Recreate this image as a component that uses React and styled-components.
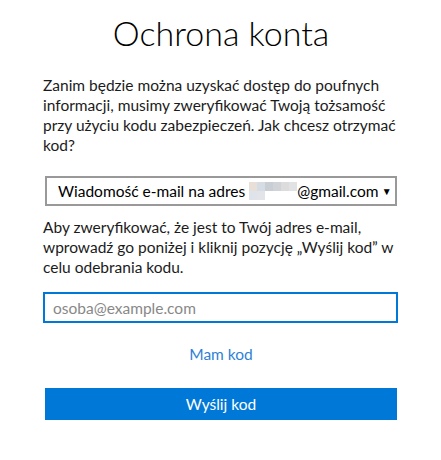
import React from 'react';
import styled, { createGlobalStyle } from 'styled-components';

const GlobalStyle = createGlobalStyle`
    html, body {
        margin: 0;
        padding: 0;
        background: #fff;
    }
    body {
        font-family: "Segoe UI", "Lato", sans-serif;
        color: #1b1b1b;
    }
`;

const Page = styled.div`
    width: 441px;
    height: 460px;
    padding: 11px 42px 0 43px;
    box-sizing: border-box;
`;

const Title = styled.h1`
    margin: 0 0 20px;
    font-family: "Segoe UI Light", "Lato", "Inter", sans-serif;
    font-weight: 300;
    font-size: 34px;
    line-height: 44px;
    text-align: center;
    color: #000;
`;

const Text = styled.p`
    margin: 0;
    font-size: 15.5px;
    line-height: 20px;
`;

const SelectBox = styled.div`
    margin: 21px 0 11px 2px;
    width: 352px;
    height: 30px;
    box-sizing: border-box;
    border: 2px solid #999;
    display: flex;
    align-items: center;
    padding: 0 0 0 11px;
    font-size: 15.5px;
    color: #000;
`;

const SelectLabel = styled.span`
    flex: 1;
    display: flex;
    align-items: center;
    white-space: nowrap;
`;

const Mosaic = styled.span`
    display: inline-grid;
    grid-template-columns: repeat(6, 8px);
    grid-template-rows: repeat(2, 9px);
    margin: 0 0 0 4px;
`;

const Tile = styled.span`
    background: ${props => props.color};
`;

const Arrow = styled.span`
    width: 18px;
    font-size: 10px;
    text-align: center;
`;

const EmailInput = styled.input`
    display: block;
    margin-top: 15px;
    width: 355px;
    height: 31px;
    box-sizing: border-box;
    border: 2px solid #0078d7;
    padding: 0 8px;
    font-family: inherit;
    font-size: 15.5px;
    outline: none;
    color: #000;
    &::placeholder {
        color: #888;
    }
`;

const LinkRow = styled.div`
    margin-top: 21px;
    line-height: 20px;
    text-align: center;
`;

const Link = styled.a`
    font-size: 15.5px;
    color: #2f7fd6;
    text-decoration: none;
    cursor: pointer;
`;

const Button = styled.button`
    display: block;
    margin: 24px 0 0 2px;
    width: 352px;
    height: 32px;
    border: none;
    background-color: #0078d7;
    color: #fff;
    font-family: inherit;
    font-size: 15.5px;
    cursor: pointer;
`;

const tiles = [
    '#e8e0d8', '#d6dce4', '#c9cdd4', '#d0d3d8', '#dcdcdc', '#e0e2e4',
    '#dfe4ea', '#e2e4ea', '#ffffff', '#ffffff', '#ffffff', '#ffffff',
];

export default function App() {
    return (
        <Page>
            <GlobalStyle />
            <Title>Ochrona konta</Title>
            <Text>
                Zanim będzie można uzyskać dostęp do poufnych informacji, musimy zweryfikować Twoją tożsamość przy użyciu kodu zabezpieczeń. Jak chcesz otrzymać kod?
            </Text>
            <SelectBox>
                <SelectLabel>
                    Wiadomość e-mail na adres
                    <Mosaic>
                        {tiles.map((c, i) => <Tile key={i} color={c} />)}
                    </Mosaic>
                    @gmail.com
                </SelectLabel>
                <Arrow>▼</Arrow>
            </SelectBox>
            <Text>
                Aby zweryfikować, że jest to Twój adres e-mail, wprowadź go poniżej i kliknij pozycję „Wyślij kod” w celu odebrania kodu.
            </Text>
            <EmailInput placeholder="osoba@example.com" autoFocus />
            <LinkRow>
                <Link>Mam kod</Link>
            </LinkRow>
            <Button>Wyślij kod</Button>
        </Page>
    );
}
